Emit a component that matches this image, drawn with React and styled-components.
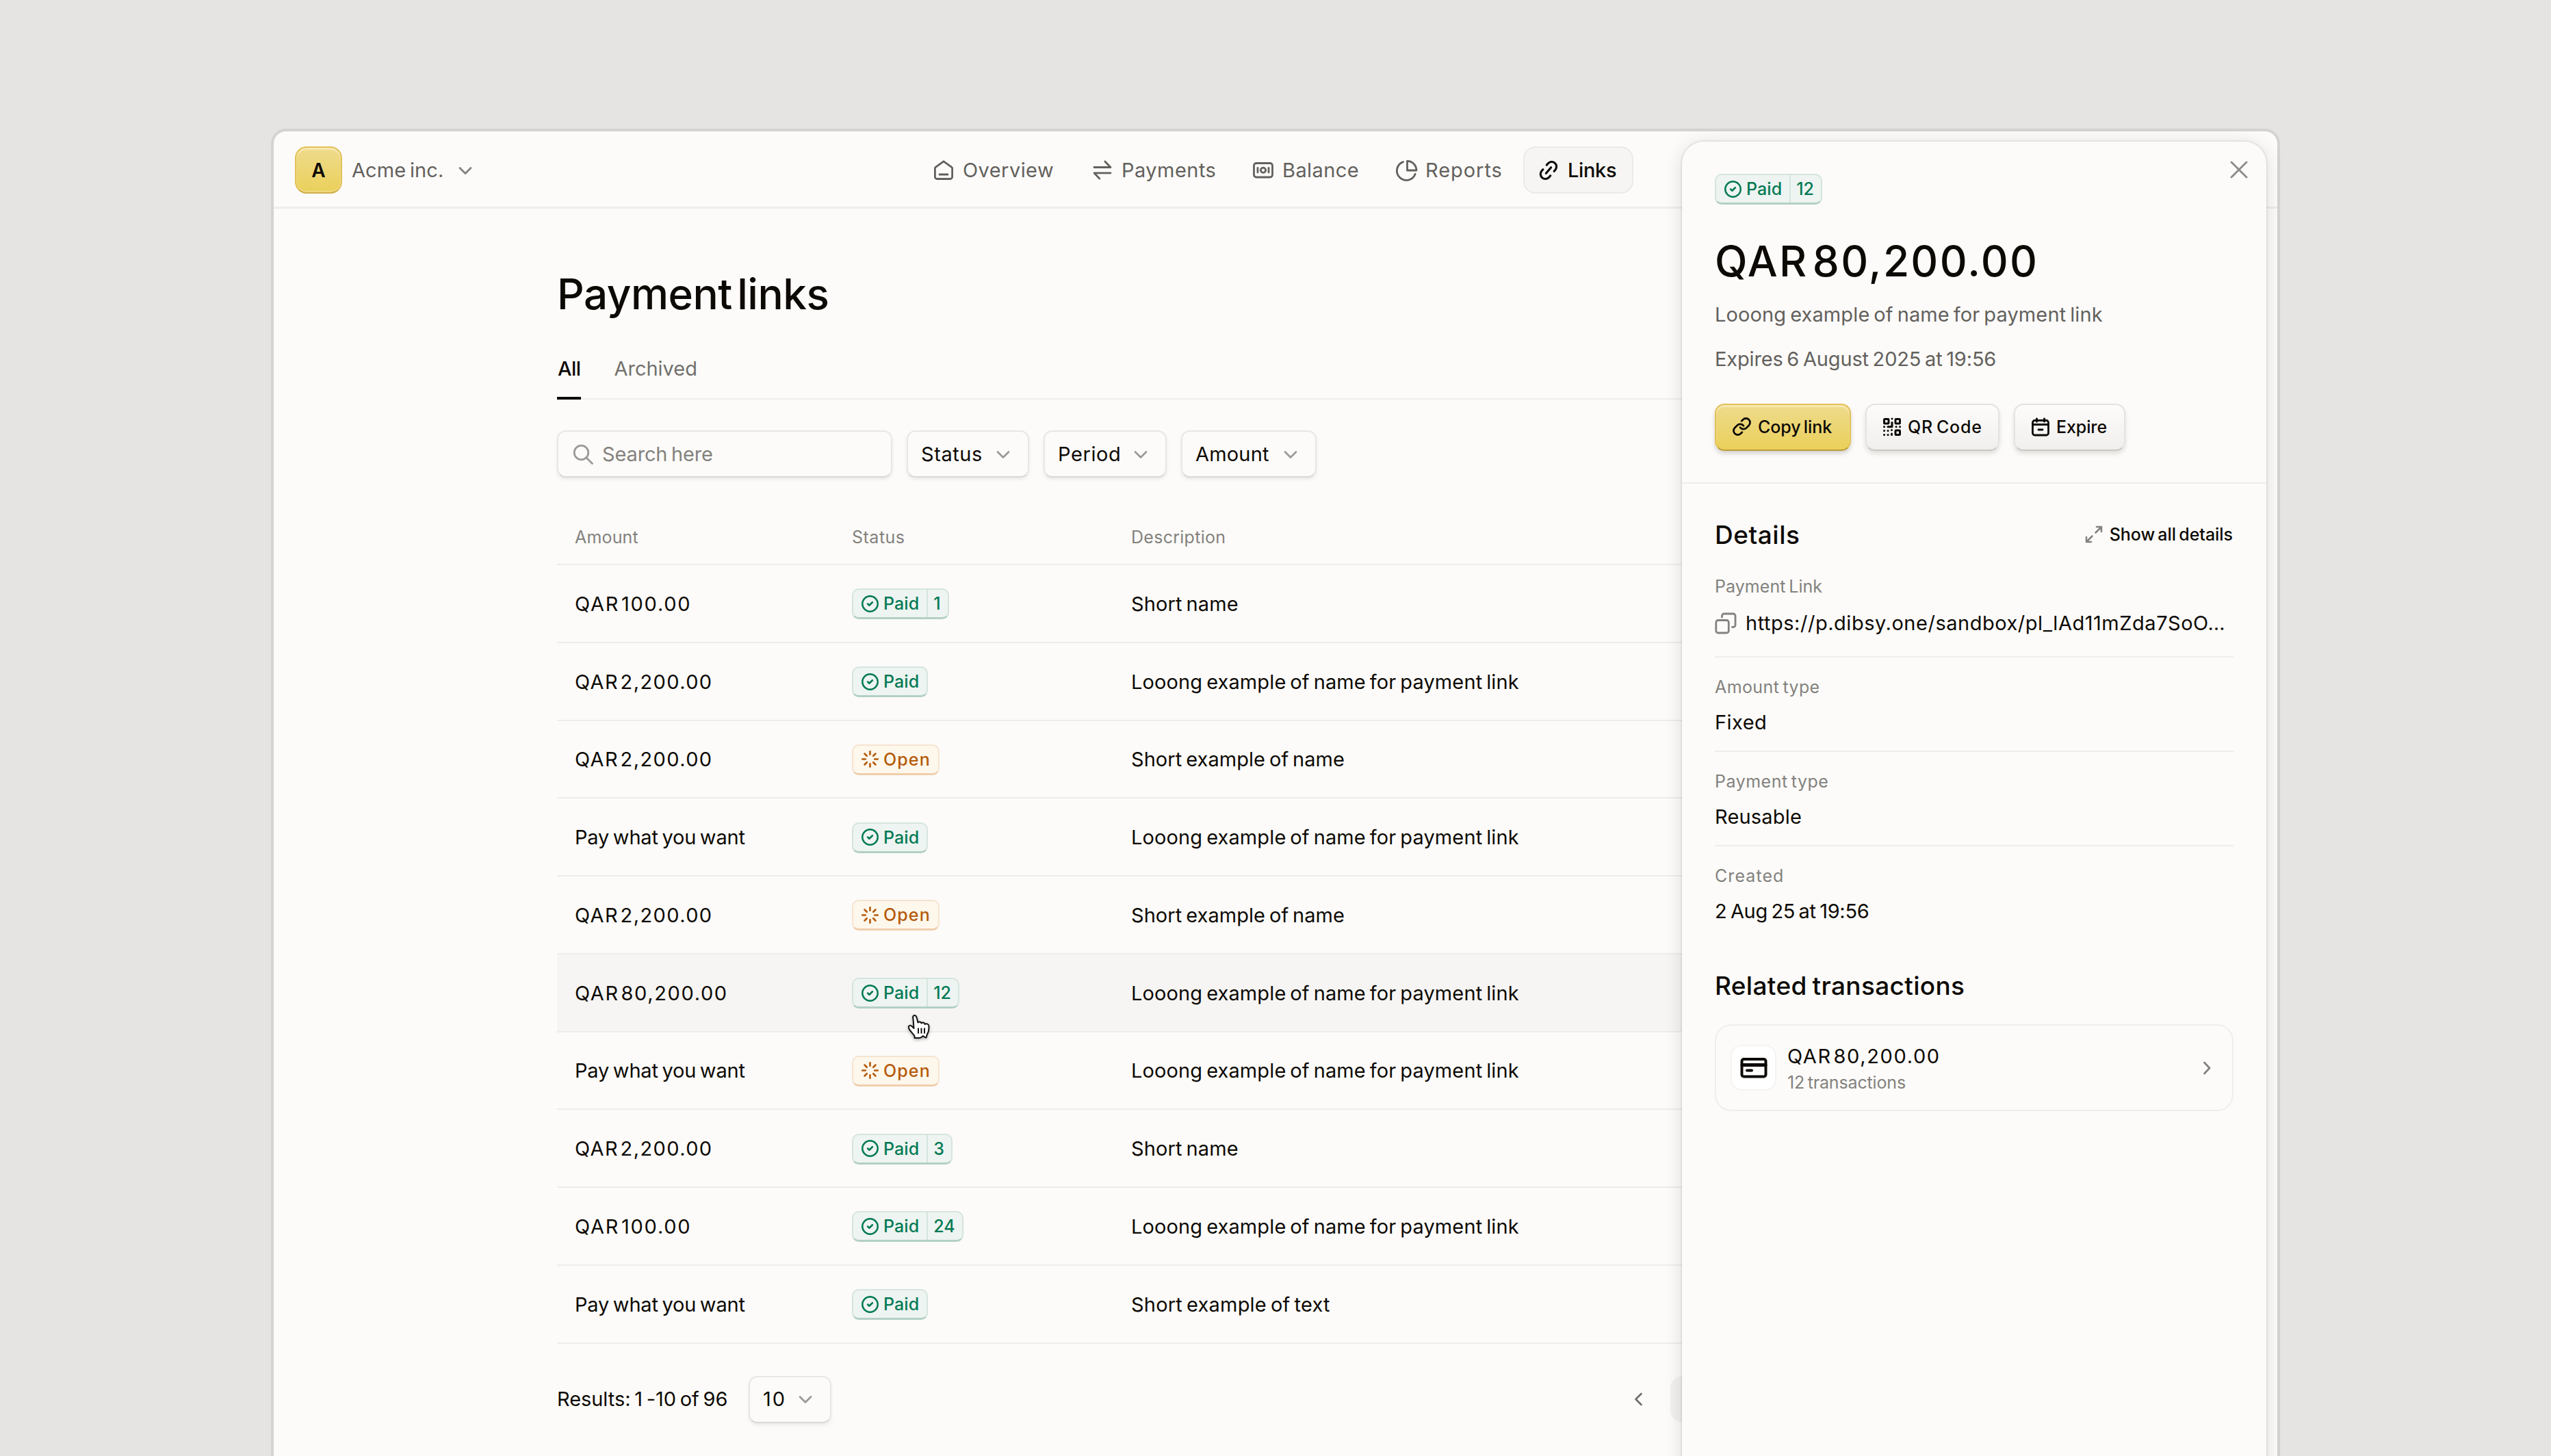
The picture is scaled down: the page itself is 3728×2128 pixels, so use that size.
import styled, { createGlobalStyle, css } from "styled-components";
import { CircleCheck, Link, Link2, Loader, X } from "lucide-react";

const GlobalStyle = createGlobalStyle`
  *, *::before, *::after {
    box-sizing: border-box;
  }
  body {
    margin: 0;
    background: #e5e4e2;
    color: #0d0a05;
    font-family: Inter, sans-serif;
    font-size: 29px;
    line-height: 40px;
    word-spacing: -0.08em;
  }
  button {
    font: inherit;
    color: inherit;
    word-spacing: inherit;
    cursor: pointer;
  }
  svg {
    display: block;
    flex: none;
  }
`;

/* per-label tracking, in em */
const tracking = css`
  letter-spacing: ${(p) => p.$ls || 0}em;
`;

const Page = styled.div`
  width: 3728px;
  height: 2128px;
  padding: 192px 0 0 400px;
  overflow: hidden;
`;

const Window = styled.div`
  position: relative; /* the drawer is placed against it */
  width: 2928px;
  height: 1980px;
  background: #fcfbf9;
  border-radius: 18px;
  box-shadow: 0 0 0 4px #d4d3d0;
`;

const Header = styled.header`
  display: flex;
  align-items: center;
  height: 113px;
  padding: 3px 0 0 31px;
  border-bottom: 3px solid #eeedeb;
`;

const Brand = styled.div`
  display: flex;
  align-items: center;
  width: 911px;
  color: #63615d;
`;

const Logo = styled.div`
  display: flex;
  align-items: center;
  justify-content: center;
  width: 69px;
  height: 69px;
  margin-right: 14px;
  border: 2px solid #e3c158;
  border-bottom-color: #cfae4b;
  border-radius: 17px;
  background: linear-gradient(#eedb8c, #ead05a);
  box-shadow: inset 0 3px 2px #f8e9b4, inset 0 -2px 2px #f0da86;
  color: #0d0a05;
  font-size: 28px;
  font-weight: 600;
`;

const BrandName = styled.span`
  margin-right: 21px;
  ${tracking}
`;

const Nav = styled.nav`
  display: flex;
  gap: 10px;
`;

const NavItem = styled.a`
  display: flex;
  align-items: center;
  gap: 11px;
  width: ${(p) => p.$w}px;
  height: 69px;
  padding-left: 18px;
  border: 2px solid ${(p) => (p.$active ? "#ebeae8" : "transparent")};
  border-radius: 18px;
  background: ${(p) => (p.$active ? "#f6f5f3" : "none")};
  color: ${(p) => (p.$active ? "#0d0a05" : "#63615d")};
  font-weight: ${(p) => (p.$active ? 500 : 400)};
  ${tracking}
`;

const Main = styled.main`
  width: 2517px;
  padding: 85px 0 0 414px;
`;

const Title = styled.h1`
  margin: 0;
  font-size: 62px;
  font-weight: 500;
  line-height: 80px;
  letter-spacing: -0.008em;
  word-spacing: -0.14em;
`;

const Tabs = styled.div`
  display: flex;
  gap: 47px;
  height: 86px;
  margin-top: 28px;
  box-shadow: inset 0 -2px #eeedeb;
`;

const Tab = styled.a`
  height: 86px;
  padding: 0 1px;
  line-height: 82px;
  border-bottom: 4px solid ${(p) => (p.$active ? "#0d0a05" : "transparent")};
  color: ${(p) => (p.$active ? "#0d0a05" : "#72706c")};
  font-weight: ${(p) => (p.$active ? 500 : 400)};
  ${tracking}
`;

const Filters = styled.div`
  display: flex;
  gap: 21px;
  margin-top: 45px;
`;

const control = css`
  display: flex;
  align-items: center;
  height: 69px;
  border: 2px solid #e8e7e4;
  border-bottom-color: #d9d8d5;
  border-radius: 13px;
  background: #fcfbf9;
  box-shadow: 0 3px 5px rgba(20, 15, 5, 0.07);
`;

const SearchBox = styled.div`
  ${control}
  gap: 13px;
  width: 490px;
  padding-left: 21px;
  color: #83827e;
  letter-spacing: -0.005em;
`;

const Select = styled.button`
  ${control}
  justify-content: space-between;
  width: ${(p) => p.$w}px;
  padding: 0 25px 0 19px;
  ${tracking}
`;

const Table = styled.div`
  margin-top: 45px;
`;

const Row = styled.div`
  display: grid;
  grid-template-columns: 405px 408px 1fr;
  align-items: center;
  height: 113.75px;
  padding: 2px 0 0 26px;
  border-bottom: 2px solid #eeedeb;
  background: ${(p) => (p.$hover ? "#f6f5f3" : "none")};
`;

const HeadRow = styled(Row)`
  height: 83px;
  color: #83827e;
  font-size: 25px;
`;

const Cell = styled.span`
  ${tracking}
`;

/* the gap after the currency code is tighter than a word gap */
const Money = styled.span`
  word-spacing: -0.24em;
  ${tracking}
`;

const tones = {
  paid: { fg: "#047a55", bg: "#eef4f1", line: "#d5e5de", edge: "#b3d0c5" },
  open: { fg: "#b45a09", bg: "#fdf7ec", line: "#f6e4d0", edge: "#f0ceac" },
};

const BadgeBox = styled.span`
  display: inline-flex;
  align-items: stretch;
  width: fit-content;
  height: 45px;
  border: 2px solid ${(p) => tones[p.$tone].line};
  border-bottom: 3px solid ${(p) => tones[p.$tone].edge};
  border-radius: 10px;
  background: ${(p) => tones[p.$tone].bg};
  color: ${(p) => tones[p.$tone].fg};
  font-size: 25px;
  font-weight: 550;
`;

const BadgeLabel = styled.span`
  display: flex;
  align-items: center;
  gap: 6px;
  padding: 0 11px;
  ${tracking}
`;

const BadgeCount = styled.span`
  display: flex;
  align-items: center;
  padding: 0 10px 0 8px;
  border-left: 2px solid ${(p) => tones[p.$tone].line};
`;

const Footer = styled.div`
  display: flex;
  align-items: center;
  margin-top: 47px;
`;

const Results = styled.span`
  width: 280px;
  white-space: nowrap;
  letter-spacing: -0.002em;
`;

const Pager = styled.div`
  display: flex;
  align-items: center;
  gap: 36px;
  margin-left: auto;
  margin-right: 412px;
`;

const PageButton = styled.div`
  width: 64px;
  height: 66px;
  border-radius: 16px;
  background: #f2f1ef;
`;

const Drawer = styled.aside`
  position: absolute;
  top: 15px;
  right: 16px;
  bottom: 0;
  width: 854px;
  border-radius: 32px 32px 0 0;
  background: #fcfbf9;
  box-shadow: 0 0 0 2px rgba(20, 15, 5, 0.06), 0 4px 28px rgba(20, 15, 5, 0.13);
`;

const CloseButton = styled.button`
  position: absolute;
  top: 19px;
  right: 18px;
  padding: 0;
  border: 0;
  background: none;
  color: #8f8e8b;
`;

const Summary = styled.section`
  display: flex;
  flex-direction: column;
  padding: 47px 48px 46px;
  border-bottom: 2px solid #eeedeb;
`;

const Total = styled.div`
  margin-top: 43px;
  font-size: 62px;
  font-weight: 500;
  line-height: 80px;
  letter-spacing: 0.037em;
  word-spacing: -0.2em;
`;

const Muted = styled.div`
  margin-top: ${(p) => p.$gap}px;
  color: #63615d;
  ${tracking}
`;

const Actions = styled.div`
  display: flex;
  gap: 21px;
  margin-top: 45px;
`;

const Action = styled.button`
  display: flex;
  align-items: center;
  gap: 9px;
  width: ${(p) => p.$w}px;
  height: 69px;
  padding: 0 0 2px 23px;
  border: 2px solid #e4e3e0;
  border-bottom-color: #c9c8c5;
  border-radius: 14px;
  background: linear-gradient(#fdfcfb, #f0efed);
  box-shadow: 0 4px 6px rgba(20, 15, 5, 0.12);
  font-size: 25px;
  font-weight: 550;
  white-space: nowrap;
  ${tracking}
  ${(p) =>
    p.$primary &&
    css`
      border-color: #e3c158;
      border-bottom-color: #bd9c3c;
      background: linear-gradient(#eedb8c, #ead05a);
      box-shadow: inset 0 3px 2px #f8e9b4, 0 4px 6px rgba(20, 15, 5, 0.16);
    `}
`;

const Details = styled.section`
  padding: 50px 48px 0;
`;

const SectionHead = styled.div`
  display: flex;
  align-items: center;
  justify-content: space-between;
  margin-bottom: 35px;
`;

const SectionTitle = styled.h2`
  margin: 0;
  font-size: 37px;
  font-weight: 500;
  line-height: 50px;
  ${tracking}
`;

const ShowAll = styled.a`
  display: flex;
  align-items: center;
  gap: 9px;
  margin: -3px 1px 0 0;
  font-size: 25px;
  font-weight: 500;
  letter-spacing: -0.002em;
  svg {
    color: #83827e;
  }
`;

const Field = styled.div`
  margin-bottom: 28px;
  padding-bottom: ${(p) => p.$pb || 21}px;
  border-bottom: 2px solid #eeedeb;
  &:last-of-type {
    margin-bottom: 64px;
    padding-bottom: 0;
    border: 0;
  }
`;

const FieldLabel = styled.div`
  color: #83827e;
  font-size: 25px;
  line-height: 30px;
  ${tracking}
`;

const FieldValue = styled.div`
  display: flex;
  align-items: center;
  gap: 13px;
  margin-top: ${(p) => p.$gap || 17}px;
  white-space: nowrap;
  ${tracking}
  svg {
    color: #83827e;
  }
`;

const Transaction = styled.a`
  display: flex;
  align-items: center;
  height: 127px;
  margin-top: 31px;
  padding: 0 26px 0 23px;
  border: 2px solid #efeeec;
  border-radius: 24px;
`;

const CardTile = styled.span`
  display: flex;
  align-items: center;
  justify-content: center;
  width: 63px;
  height: 63px;
  margin-right: 18px;
  border-radius: 14px;
  background: #fff;
  box-shadow: 0 0 0 2px #f4f3f1;
`;

const TransactionText = styled.span`
  display: flex;
  flex-direction: column;
  flex: 1;
  margin-top: 4px;
  line-height: 38px;
`;

const TransactionCount = styled.span`
  color: #83827e;
  font-size: 25px;
  letter-spacing: -0.006em;
`;

const Pointer = styled.svg`
  position: absolute;
  left: 926px;
  top: 1290px;
  filter: drop-shadow(0 2px 2px rgba(0, 0, 0, 0.3));
`;

const Icon = ({ size = 34, width = 2.8, children }) => (
  <svg
    width={size}
    height={size}
    viewBox={`0 0 ${size} ${size}`}
    fill="none"
    stroke="currentColor"
    strokeWidth={width}
    strokeLinecap="round"
    strokeLinejoin="round"
  >
    {children}
  </svg>
);

const chevrons = {
  down: "M3 7.5l8 8L19 7.5",
  left: "M15.500 3L7.500 11L15.500 19",
  right: "M7.500 3L15 11L7.500 19",
};

const Chevron = ({ color = "#9b9a97", dir = "down" }) => (
  <svg width="22" height="22" viewBox="0 0 22 22" fill="none" stroke={color} strokeWidth="2.8" strokeLinecap="round" strokeLinejoin="round">
    <path d={chevrons[dir]} />
  </svg>
);

const HomeIcon = () => (
  <Icon>
    <path d="M17 3.800L28.800 12.300a2 2 0 0 1 .8 1.600V26.500a3 3 0 0 1-3 3H7.400a3 3 0 0 1-3-3V13.900a2 2 0 0 1 .8-1.600z" />
    <path d="M11 23h12" />
  </Icon>
);

const TransferIcon = () => (
  <Icon>
    <path d="M5 12.500h24L20.800 4" />
    <path d="M29 20.800H5L12.800 29" />
  </Icon>
);

const BalanceIcon = () => (
  <Icon>
    <rect x="3.500" y="6.500" width="27" height="20.500" rx="3.500" />
    <circle cx="17" cy="16.800" r="3.600" />
    <path d="M9 13.500v6.600M25 13.500v6.600" />
  </Icon>
);

const ReportsIcon = () => (
  <Icon>
    <path d="M12.500 4.600A13.800 13.800 0 1 0 30.200 22.200" />
    <path d="M18.500 3.400V17H32A13.500 13.500 0 0 0 18.500 3.400z" />
  </Icon>
);

const SearchIcon = () => (
  <Icon size={30} width={2.8}>
    <g stroke="#9b9a97">
      <circle cx="12.500" cy="12.500" r="10.300" />
      <path d="M20 20l8.500 8.500" />
    </g>
  </Icon>
);

const QrIcon = () => (
  <Icon size={28} width={3}>
    <rect x="2.500" y="2.500" width="6.500" height="6.500" rx="1" />
    <rect x="19" y="2.500" width="6.500" height="6.500" rx="1" />
    <rect x="19" y="19" width="6.500" height="6.500" rx="1" />
    <path d="M14 2v.1M14 7.500v5M2.500 13.800h.1M8 13.800h6M20 13.800h.1M25.500 13.800h.1M2.500 19.500h.1M8 19.500h.1M13.500 18.500v.1M2.500 25.500h.1M8 25.500h.1M13.500 24v1.500" />
  </Icon>
);

const CalendarIcon = () => (
  <Icon size={28} width={2.8}>
    <rect x="2.500" y="4.500" width="23" height="21.500" rx="3" />
    <path d="M2.500 10.500h23M8.500 1.800v4.500M19.500 1.800v4.500M11 18h6" />
  </Icon>
);

const ExpandIcon = () => (
  <Icon size={28} width={2.5}>
    <path d="M18 3H25v7M25 3l-8.500 8.500M10 25H3v-7M3 25l8.500-8.500" />
  </Icon>
);

const CopyIcon = () => (
  <Icon size={32}>
    <rect x="1.800" y="11.500" width="18.500" height="18.500" rx="3" />
    <path d="M10.500 7V5a3 3 0 0 1 3-3H27a3 3 0 0 1 3 3v13.500a3 3 0 0 1-3 3h-1.500" />
  </Icon>
);

const CardIcon = () => (
  <Icon size={40} width={4}>
    <rect x="2.500" y="7" width="35" height="25.500" rx="3" />
    <path d="M3 15.500h34" strokeWidth="5" />
    <path d="M10 23.500h7" />
  </Icon>
);

const Badge = ({ tone, count }) => (
  <BadgeBox $tone={tone}>
    <BadgeLabel $ls={tone === "paid" ? 0.003 : 0.045}>
      {tone === "paid" ? <CircleCheck size={27} strokeWidth={2.2} /> : <Loader size={27} strokeWidth={2.3} />}
      {tone === "paid" ? "Paid" : "Open"}
    </BadgeLabel>
    {count && <BadgeCount $tone={tone}>{count}</BadgeCount>}
  </BadgeBox>
);

const LONG = { text: "Looong example of name for payment link", ls: 0.004 };
const SHORT = { text: "Short name", ls: 0.004 };
const SHORT_EXAMPLE = { text: "Short example of name", ls: 0.002 };
const SHORT_TEXT = { text: "Short example of text", ls: 0.007 };

const HUNDRED = { text: "QAR 100.00", ls: 0.06 };
const TWO_K = { text: "QAR 2,200.00", ls: 0.048 };
const EIGHTY_K = { text: "QAR 80,200.00", ls: 0.056 };
const ANY = { text: "Pay what you want", ls: -0.006 };

const links = [
  { amount: HUNDRED, tone: "paid", count: 1, name: SHORT },
  { amount: TWO_K, tone: "paid", name: LONG },
  { amount: TWO_K, tone: "open", name: SHORT_EXAMPLE },
  { amount: ANY, tone: "paid", name: LONG },
  { amount: TWO_K, tone: "open", name: SHORT_EXAMPLE },
  { amount: EIGHTY_K, tone: "paid", count: 12, name: LONG, hover: true },
  { amount: ANY, tone: "open", name: LONG },
  { amount: TWO_K, tone: "paid", count: 3, name: SHORT },
  { amount: HUNDRED, tone: "paid", count: 24, name: LONG },
  { amount: ANY, tone: "paid", name: SHORT_TEXT },
];

const LinksIcon = styled(Link2)`
  transform: rotate(-50deg);
`;

const TopBar = () => (
  <Header>
    <Brand>
      <Logo>A</Logo>
      <BrandName $ls={0.002}>Acme inc.</BrandName>
      <Chevron color="#83827e" />
    </Brand>
    <Nav>
      <NavItem $w={222} $ls={0.015}><HomeIcon />Overview</NavItem>
      <NavItem $w={225} $ls={0.016}><TransferIcon />Payments</NavItem>
      <NavItem $w={199} $ls={0.014}><BalanceIcon />Balance</NavItem>
      <NavItem $w={198} $ls={0.033}><ReportsIcon />Reports</NavItem>
      <NavItem $w={161} $ls={-0.012} $active><LinksIcon size={34} strokeWidth={2.2} />Links</NavItem>
    </Nav>
  </Header>
);

const PaymentLinks = () => (
  <Main>
    <Title>Payment links</Title>
    <Tabs>
      <Tab $ls={-0.02} $active>All</Tab>
      <Tab>Archived</Tab>
    </Tabs>
    <Filters>
      <SearchBox><SearchIcon />Search here</SearchBox>
      <Select $w={179} $ls={0.02}>Status<Chevron /></Select>
      <Select $w={180} $ls={0.02}>Period<Chevron /></Select>
      <Select $w={198} $ls={0.006}>Amount<Chevron /></Select>
    </Filters>
    <Table>
      <HeadRow>
        <Cell $ls={0.007}>Amount</Cell>
        <Cell $ls={0.02}>Status</Cell>
        <Cell $ls={0.011}>Description</Cell>
      </HeadRow>
      {links.map((link, i) => (
        <Row key={i} $hover={link.hover}>
          {link.amount === ANY
            ? <Cell $ls={link.amount.ls}>{link.amount.text}</Cell>
            : <Money $ls={link.amount.ls}>{link.amount.text}</Money>}
          <Badge tone={link.tone} count={link.count} />
          <Cell $ls={link.name.ls}>{link.name.text}</Cell>
        </Row>
      ))}
    </Table>
    <Footer>
      <Results>Results: 1 -10 of 96</Results>
      <Select $w={121} $ls={0.07}>10<Chevron /></Select>
      <Pager>
        <Chevron color="#72706c" dir="left" />
        <PageButton />
      </Pager>
    </Footer>
  </Main>
);

const LinkDrawer = () => (
  <Drawer>
    <CloseButton><X size={44} strokeWidth={1.6} /></CloseButton>
    <Summary>
      <Badge tone="paid" count={12} />
      <Total>QAR 80,200.00</Total>
      <Muted $gap={18} $ls={0.004}>Looong example of name for payment link</Muted>
      <Muted $gap={25} $ls={-0.005}>Expires 6 August 2025 at 19:56</Muted>
      <Actions>
        <Action $w={199} $ls={-0.003} $primary><Link size={29} strokeWidth={2.3} />Copy link</Action>
        <Action $w={196} $ls={0.03}><QrIcon />QR Code</Action>
        <Action $w={163} $ls={-0.004}><CalendarIcon />Expire</Action>
      </Actions>
    </Summary>
    <Details>
      <SectionHead>
        <SectionTitle $ls={0.014}>Details</SectionTitle>
        <ShowAll><ExpandIcon />Show all details</ShowAll>
      </SectionHead>
      <Field $pb={28}>
        <FieldLabel $ls={0.002}>Payment Link</FieldLabel>
        <FieldValue $gap={19} $ls={0.018}><CopyIcon />https://p.dibsy.one/sandbox/pl_lAd11mZda7SoO…</FieldValue>
      </Field>
      <Field>
        <FieldLabel $ls={0.016}>Amount type</FieldLabel>
        <FieldValue $ls={0.015}>Fixed</FieldValue>
      </Field>
      <Field>
        <FieldLabel $ls={0.02}>Payment type</FieldLabel>
        <FieldValue $ls={0.006}>Reusable</FieldValue>
      </Field>
      <Field>
        <FieldLabel $ls={0.043}>Created</FieldLabel>
        <FieldValue $ls={-0.011}>2 Aug 25 at 19:56</FieldValue>
      </Field>
      <SectionTitle $ls={0.009}>Related transactions</SectionTitle>
      <Transaction>
        <CardTile><CardIcon /></CardTile>
        <TransactionText>
          <Money $ls={0.056}>QAR 80,200.00</Money>
          <TransactionCount>12 transactions</TransactionCount>
        </TransactionText>
        <Chevron color="#83827e" dir="right" />
      </Transaction>
    </Details>
  </Drawer>
);

const HandPointer = () => (
  <Pointer width="36" height="38" viewBox="0 0 36 38" fill="#fff" stroke="#111" strokeWidth="2" strokeLinejoin="round">
    <path d="M10.500 35V32.500C9 29 5 26 3 22.500C1.500 20 1.500 18 3 17C4.800 15.800 6.800 17.500 9.500 21L8.500 7.500C7.500 3.800 8.500 2 10.500 2C12.500 2 13.300 3.500 14 6.500L15.500 12.500C17.500 10.500 20 11.500 20.500 13.500C22.500 11.500 25 12.500 25.500 15C28 13.500 31.500 14.500 31.500 18C31.500 23 31.500 26 29 29.500L27.500 34.500C25.500 34.500 24.500 33 23 32C21.500 33.500 20 35 18 35Z" />
    <path d="M16 20.500v8M20.500 20.500v8M25 20.500v8" fill="none" />
  </Pointer>
);

const App = () => {
  return (
    <>
      <GlobalStyle />
      <Page>
        <Window>
          <TopBar />
          <PaymentLinks />
          <LinkDrawer />
          <HandPointer />
        </Window>
      </Page>
    </>
  );
};

export default App;
